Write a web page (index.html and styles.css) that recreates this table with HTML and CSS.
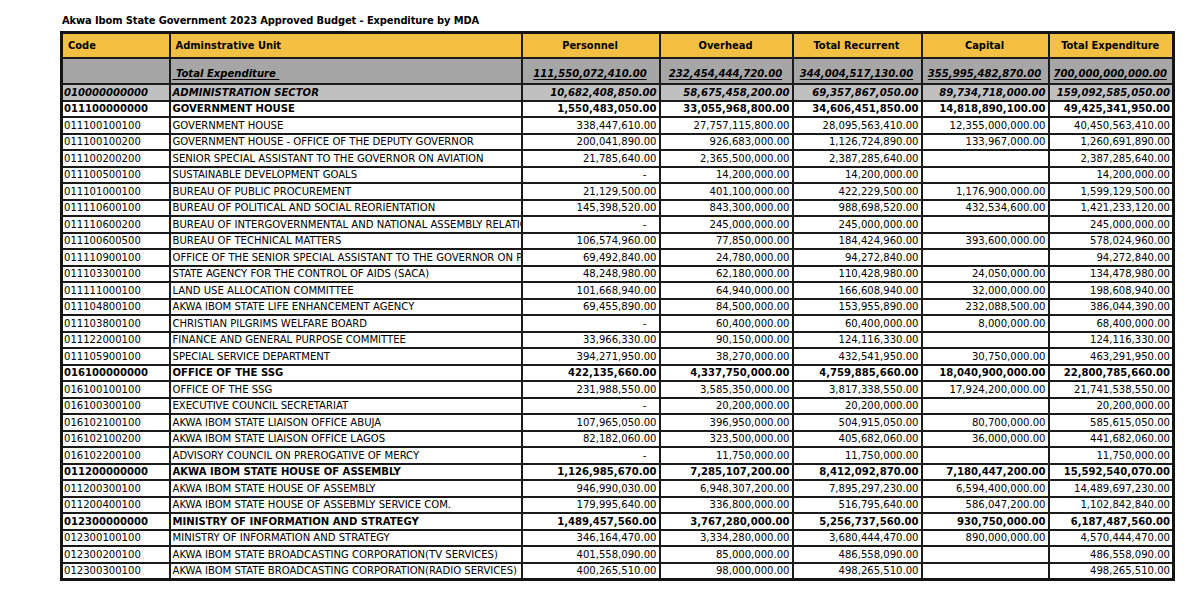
FILE: index.html
```html
<!DOCTYPE html>
<html>
<head>
<meta charset="utf-8">
<link rel="stylesheet" href="styles.css">
</head>
<body>
<div class="sheet">
<div class="title">Akwa Ibom State Government 2023 Approved Budget - Expenditure by MDA</div>
<table class="budget">
<colgroup>
<col class="c-code"><col class="c-unit"><col class="c-per"><col class="c-ovh"><col class="c-rec"><col class="c-cap"><col class="c-tot">
</colgroup>
<thead>
<tr class="head"><th class="left">Code</th><th class="left">Adminstrative Unit</th><th>Personnel</th><th>Overhead</th><th>Total Recurrent</th><th>Capital</th><th>Total Expenditure</th></tr>
</thead>
<tbody>
<tr class="grand"><td></td><td class="unit"><span class="u">&nbsp;Total Expenditure&nbsp;</span></td><td><span class="u">111,550,072,410.00</span></td><td><span class="u">232,454,444,720.00</span></td><td><span class="u">344,004,517,130.00</span></td><td><span class="u">355,995,482,870.00</span></td><td><span class="u">700,000,000,000.00</span></td></tr>
<tr class="sector"><td>010000000000</td><td class="unit">ADMINISTRATION SECTOR</td><td class="num">10,682,408,850.00</td><td class="num">58,675,458,200.00</td><td class="num">69,357,867,050.00</td><td class="num">89,734,718,000.00</td><td class="num">159,092,585,050.00</td></tr>
<tr class="bold"><td>011100000000</td><td class="unit">GOVERNMENT HOUSE</td><td class="num">1,550,483,050.00</td><td class="num">33,055,968,800.00</td><td class="num">34,606,451,850.00</td><td class="num">14,818,890,100.00</td><td class="num">49,425,341,950.00</td></tr>
<tr><td>011100100100</td><td class="unit">GOVERNMENT HOUSE</td><td class="num">338,447,610.00</td><td class="num">27,757,115,800.00</td><td class="num">28,095,563,410.00</td><td class="num">12,355,000,000.00</td><td class="num">40,450,563,410.00</td></tr>
<tr><td>011100100200</td><td class="unit">GOVERNMENT HOUSE - OFFICE OF THE DEPUTY GOVERNOR</td><td class="num">200,041,890.00</td><td class="num">926,683,000.00</td><td class="num">1,126,724,890.00</td><td class="num">133,967,000.00</td><td class="num">1,260,691,890.00</td></tr>
<tr><td>011100200200</td><td class="unit">SENIOR SPECIAL ASSISTANT TO THE GOVERNOR ON AVIATION</td><td class="num">21,785,640.00</td><td class="num">2,365,500,000.00</td><td class="num">2,387,285,640.00</td><td class="num"></td><td class="num">2,387,285,640.00</td></tr>
<tr><td>011100500100</td><td class="unit">SUSTAINABLE DEVELOPMENT GOALS</td><td class="num dash">-</td><td class="num">14,200,000.00</td><td class="num">14,200,000.00</td><td class="num"></td><td class="num">14,200,000.00</td></tr>
<tr><td>011101000100</td><td class="unit">BUREAU OF PUBLIC PROCUREMENT</td><td class="num">21,129,500.00</td><td class="num">401,100,000.00</td><td class="num">422,229,500.00</td><td class="num">1,176,900,000.00</td><td class="num">1,599,129,500.00</td></tr>
<tr><td>011110600100</td><td class="unit">BUREAU OF POLITICAL AND SOCIAL REORIENTATION</td><td class="num">145,398,520.00</td><td class="num">843,300,000.00</td><td class="num">988,698,520.00</td><td class="num">432,534,600.00</td><td class="num">1,421,233,120.00</td></tr>
<tr><td>011110600200</td><td class="unit">BUREAU OF INTERGOVERNMENTAL AND NATIONAL ASSEMBLY RELATIONS</td><td class="num dash">-</td><td class="num">245,000,000.00</td><td class="num">245,000,000.00</td><td class="num"></td><td class="num">245,000,000.00</td></tr>
<tr><td>011100600500</td><td class="unit">BUREAU OF TECHNICAL MATTERS</td><td class="num">106,574,960.00</td><td class="num">77,850,000.00</td><td class="num">184,424,960.00</td><td class="num">393,600,000.00</td><td class="num">578,024,960.00</td></tr>
<tr><td>011110900100</td><td class="unit">OFFICE OF THE SENIOR SPECIAL ASSISTANT TO THE GOVERNOR ON POLITICAL MATTERS</td><td class="num">69,492,840.00</td><td class="num">24,780,000.00</td><td class="num">94,272,840.00</td><td class="num"></td><td class="num">94,272,840.00</td></tr>
<tr><td>011103300100</td><td class="unit">STATE AGENCY FOR THE CONTROL OF AIDS (SACA)</td><td class="num">48,248,980.00</td><td class="num">62,180,000.00</td><td class="num">110,428,980.00</td><td class="num">24,050,000.00</td><td class="num">134,478,980.00</td></tr>
<tr><td>011111000100</td><td class="unit">LAND USE ALLOCATION COMMITTEE</td><td class="num">101,668,940.00</td><td class="num">64,940,000.00</td><td class="num">166,608,940.00</td><td class="num">32,000,000.00</td><td class="num">198,608,940.00</td></tr>
<tr><td>011104800100</td><td class="unit">AKWA IBOM STATE LIFE ENHANCEMENT AGENCY</td><td class="num">69,455,890.00</td><td class="num">84,500,000.00</td><td class="num">153,955,890.00</td><td class="num">232,088,500.00</td><td class="num">386,044,390.00</td></tr>
<tr><td>011103800100</td><td class="unit">CHRISTIAN PILGRIMS WELFARE BOARD</td><td class="num dash">-</td><td class="num">60,400,000.00</td><td class="num">60,400,000.00</td><td class="num">8,000,000.00</td><td class="num">68,400,000.00</td></tr>
<tr><td>011122000100</td><td class="unit">FINANCE AND GENERAL PURPOSE COMMITTEE</td><td class="num">33,966,330.00</td><td class="num">90,150,000.00</td><td class="num">124,116,330.00</td><td class="num"></td><td class="num">124,116,330.00</td></tr>
<tr><td>011105900100</td><td class="unit">SPECIAL SERVICE DEPARTMENT</td><td class="num">394,271,950.00</td><td class="num">38,270,000.00</td><td class="num">432,541,950.00</td><td class="num">30,750,000.00</td><td class="num">463,291,950.00</td></tr>
<tr class="bold"><td>016100000000</td><td class="unit">OFFICE OF THE SSG</td><td class="num">422,135,660.00</td><td class="num">4,337,750,000.00</td><td class="num">4,759,885,660.00</td><td class="num">18,040,900,000.00</td><td class="num">22,800,785,660.00</td></tr>
<tr><td>016100100100</td><td class="unit">OFFICE OF THE SSG</td><td class="num">231,988,550.00</td><td class="num">3,585,350,000.00</td><td class="num">3,817,338,550.00</td><td class="num">17,924,200,000.00</td><td class="num">21,741,538,550.00</td></tr>
<tr><td>016100300100</td><td class="unit">EXECUTIVE COUNCIL SECRETARIAT</td><td class="num dash">-</td><td class="num">20,200,000.00</td><td class="num">20,200,000.00</td><td class="num"></td><td class="num">20,200,000.00</td></tr>
<tr><td>016102100100</td><td class="unit">AKWA IBOM STATE LIAISON OFFICE ABUJA</td><td class="num">107,965,050.00</td><td class="num">396,950,000.00</td><td class="num">504,915,050.00</td><td class="num">80,700,000.00</td><td class="num">585,615,050.00</td></tr>
<tr><td>016102100200</td><td class="unit">AKWA IBOM STATE LIAISON OFFICE LAGOS</td><td class="num">82,182,060.00</td><td class="num">323,500,000.00</td><td class="num">405,682,060.00</td><td class="num">36,000,000.00</td><td class="num">441,682,060.00</td></tr>
<tr><td>016102200100</td><td class="unit">ADVISORY COUNCIL ON PREROGATIVE OF MERCY</td><td class="num dash">-</td><td class="num">11,750,000.00</td><td class="num">11,750,000.00</td><td class="num"></td><td class="num">11,750,000.00</td></tr>
<tr class="bold"><td>011200000000</td><td class="unit">AKWA IBOM STATE HOUSE OF ASSEMBLY</td><td class="num">1,126,985,670.00</td><td class="num">7,285,107,200.00</td><td class="num">8,412,092,870.00</td><td class="num">7,180,447,200.00</td><td class="num">15,592,540,070.00</td></tr>
<tr><td>011200300100</td><td class="unit">AKWA IBOM STATE HOUSE OF ASSEMBLY</td><td class="num">946,990,030.00</td><td class="num">6,948,307,200.00</td><td class="num">7,895,297,230.00</td><td class="num">6,594,400,000.00</td><td class="num">14,489,697,230.00</td></tr>
<tr><td>011200400100</td><td class="unit">AKWA IBOM STATE HOUSE OF ASSEBMLY SERVICE COM.</td><td class="num">179,995,640.00</td><td class="num">336,800,000.00</td><td class="num">516,795,640.00</td><td class="num">586,047,200.00</td><td class="num">1,102,842,840.00</td></tr>
<tr class="bold"><td>012300000000</td><td class="unit">MINISTRY OF INFORMATION AND STRATEGY</td><td class="num">1,489,457,560.00</td><td class="num">3,767,280,000.00</td><td class="num">5,256,737,560.00</td><td class="num">930,750,000.00</td><td class="num">6,187,487,560.00</td></tr>
<tr><td>012300100100</td><td class="unit">MINISTRY OF INFORMATION AND STRATEGY</td><td class="num">346,164,470.00</td><td class="num">3,334,280,000.00</td><td class="num">3,680,444,470.00</td><td class="num">890,000,000.00</td><td class="num">4,570,444,470.00</td></tr>
<tr><td>012300200100</td><td class="unit">AKWA IBOM STATE BROADCASTING CORPORATION(TV SERVICES)</td><td class="num">401,558,090.00</td><td class="num">85,000,000.00</td><td class="num">486,558,090.00</td><td class="num"></td><td class="num">486,558,090.00</td></tr>
<tr><td>012300300100</td><td class="unit">AKWA IBOM STATE BROADCASTING CORPORATION(RADIO SERVICES)</td><td class="num">400,265,510.00</td><td class="num">98,000,000.00</td><td class="num">498,265,510.00</td><td class="num"></td><td class="num">498,265,510.00</td></tr>
</tbody>
</table>
</div>
</body>
</html>
```
FILE: styles.css
```css
html, body {
  margin: 0;
  padding: 0;
  background: #ffffff;
}
.sheet {
  padding: 13px 0 0 60px;
  font-family: "DejaVu Sans Condensed", "DejaVu Sans", sans-serif;
  color: #000;
}
.title {
  font-weight: bold;
  font-size: 11px;
  line-height: 16px;
  height: 18px;
  padding-left: 2px;
  letter-spacing: -0.1px;
}
.budget {
  border-collapse: collapse;
  table-layout: fixed;
  width: 1112px;
  border: 3px solid #141414;
  font-size: 11.2px;
}
.c-code { width: 108px; }
.c-unit { width: 352px; }
.c-per { width: 138px; }
.c-ovh { width: 133px; }
.c-rec { width: 129px; }
.c-cap { width: 127px; }
.c-tot { width: 125px; }
.budget th, .budget td {
  border: 2px solid #1a1a1a;
  padding: 0 2px 0 1px;
  white-space: nowrap;
  overflow: hidden;
  line-height: 13px;
  height: 14.5px;
  vertical-align: middle;
}
.budget td.unit {
  padding-left: 2px;
  text-overflow: clip;
}
.head th {
  background: #f4c043;
  font-weight: bold;
  font-size: 11px;
  height: 23px;
  text-align: center;
}
.head th.left {
  text-align: left;
  padding-left: 5px;
}
.grand td {
  background: #a6a6a6;
  font-weight: bold;
  font-style: italic;
  height: 21px;
  text-align: center;
  vertical-align: bottom;
  padding-bottom: 3px;
}
.grand td.unit { text-align: left; padding-left: 2px; }
.u {
  text-decoration: underline;
  text-decoration-thickness: 1px;
  text-underline-offset: 2px;
}
.sector td {
  background: #c0c0c0;
  font-weight: bold;
  font-style: italic;
}
.bold td {
  font-weight: bold;
}
.num {
  text-align: right;
}
.budget td.dash {
  padding-right: 12px;
}
```
